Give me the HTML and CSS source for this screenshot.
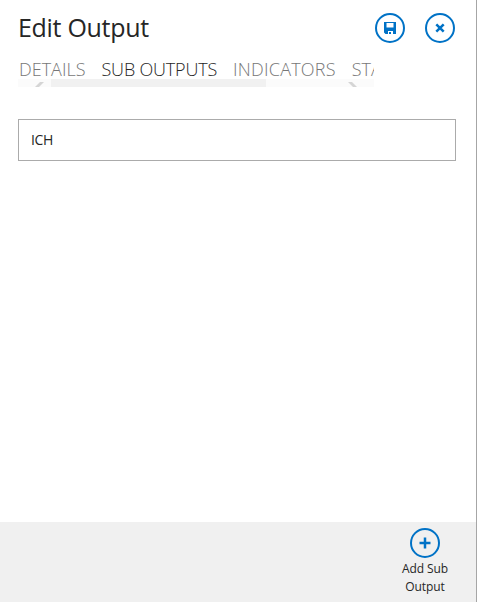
FILE: index.html
```html
<!DOCTYPE html>
<html lang="en">
<head>
<meta charset="utf-8">
<title>Edit Output</title>
<link rel="stylesheet" href="styles.css">
</head>
<body>
<main class="panel">
  <header class="header">
    <h1 class="title">Edit Output</h1>
    <div class="actions">
      <button class="round" aria-label="Save">
        <svg width="12" height="12" viewBox="0 0 12 12"><path fill="currentColor" fill-rule="evenodd" d="M0 0h12v12H1.500L0 10.500zM2.500 1v4.500h7V1zM4 9v3h1V10h2v2h2V9z"/></svg>
      </button>
      <button class="round" aria-label="Close">
        <svg width="10" height="10" viewBox="0 0 10 10"><path stroke="currentColor" stroke-width="2.500" d="M1.300 1.300l7.400 7.400M8.700 1.300L1.300 8.700"/></svg>
      </button>
    </div>
  </header>
  <nav class="tabs">
    <div class="tab-row">
      <span class="tab">DETAILS</span>
      <span class="tab active">SUB OUTPUTS</span>
      <span class="tab indicators">INDICATORS</span>
      <span class="tab">STATUS</span>
    </div>
    <div class="scrollbar">
      <svg class="arrow" width="33" height="8" viewBox="0 0 33 8"><path fill="#d5d5d5" d="M22 3h4l-5 5h-4z"/></svg>
      <div class="thumb"></div>
      <svg class="arrow end" width="33" height="8" viewBox="0 0 33 8"><path fill="#d5d5d5" d="M7 3h4l5 5h-4z"/></svg>
    </div>
  </nav>
  <section class="list"><div class="item">ICH</div></section>
  <footer class="footer">
    <div class="command">
      <button class="round" aria-label="Add">
        <svg width="12" height="12" viewBox="0 0 12 12"><path stroke="currentColor" stroke-width="2.500" d="M6 .5v11M.5 6h11"/></svg>
      </button>
      <span class="label">Add Sub Output</span>
    </div>
  </footer>
</main>
</body>
</html>
```
FILE: styles.css
```css
* { box-sizing: border-box; }
body { margin: 0; background: #fff; color: #262626; font-family: "Open Sans", "Noto Sans", sans-serif; }
.panel { width: 477px; height: 602px; display: flex; flex-direction: column; border-right: 1px solid #a6a6a6; overflow: hidden; }
.header { height: 56px; padding: 0 21px 0 18px; display: flex; justify-content: space-between; align-items: center; }
.title { margin: 0 0 2px; font-size: 25px; font-weight: 400; line-height: 34px; letter-spacing: -0.3px; }
.actions { display: flex; gap: 20px; }
.round { width: 30px; height: 30px; padding: 0; display: flex; align-items: center; justify-content: center; border: 2px solid #0072c6; border-radius: 50%; background: #fff; color: #0072c6; }
.round svg { display: block; flex: none; }
.tabs { width: 356px; height: 31px; margin-left: 18px; overflow: hidden; }
.tab-row { height: 23px; padding-left: 1px; display: flex; }
.tab { flex: none; margin-right: 16px; font-size: 18px; font-weight: 300; line-height: 27px; color: #777; white-space: nowrap; }
.active { color: #262626; letter-spacing: -0.18px; }
.indicators { letter-spacing: 0.22px; }
.scrollbar { height: 8px; display: flex; background: #fbfbfb; }
.thumb { width: 215px; background: #f1f1f1; }
.arrow { flex: none; display: block; }
.end { margin-left: auto; }
.list { flex: 1; padding: 32px 20px 0 18px; }
.item { height: 42px; padding-left: 12px; border: 1px solid #ababab; font-size: 14px; line-height: 40px; letter-spacing: -0.4px; }
.footer { height: 80px; padding: 6px 16px 0 0; display: flex; justify-content: flex-end; background: #f0f0f0; }
.command { width: 70px; display: flex; flex-direction: column; align-items: center; }
.command .round { background: transparent; }
.label { width: 56px; margin-top: 2px; font-size: 12px; line-height: 18px; letter-spacing: -0.1px; text-align: center; }
```
